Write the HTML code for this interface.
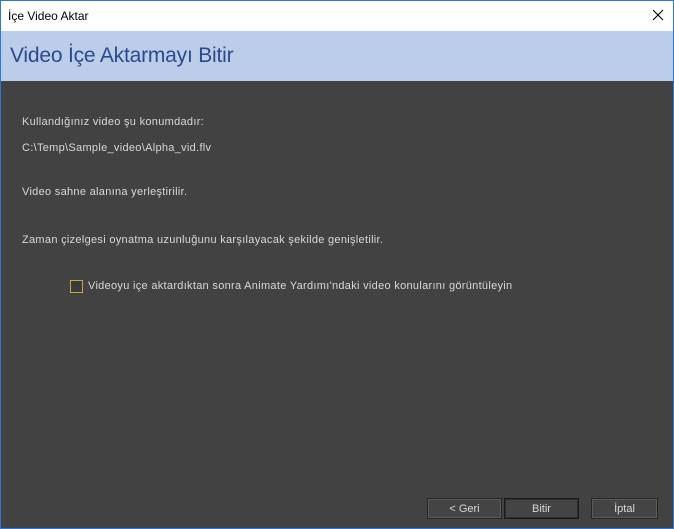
<!DOCTYPE html>
<html><head><meta charset="utf-8"><style>
*{margin:0;padding:0;box-sizing:border-box}
body{width:674px;height:529px;overflow:hidden;background:#2b79d0;font-family:"Liberation Sans",sans-serif;position:relative}
#win{position:absolute;left:1px;top:1px;width:672px;height:527px;background:#424242}
#tb{position:absolute;left:0;top:0;width:672px;height:30px;background:#fff;color:#000;font-size:12px}
#tb span{position:absolute;left:7px;top:8px}
#hd{position:absolute;left:0;top:30px;width:672px;height:50px;background:#bccdea;color:#2a4a8c;font-size:21px}
#hd span{position:absolute;left:9px;top:13px;letter-spacing:-0.2px}
.t{position:absolute;left:21px;color:#d8d8d8;font-size:11px;letter-spacing:0.3px}
.b{position:absolute;top:497px;height:21px;border:1px solid #262626;background:#444;box-shadow:inset 0 0 0 1px #5a5a5a;color:#d8d8d8;font-size:11px;text-align:center;line-height:21px}
</style></head><body><div id="win">
<div id="tb"><span>İçe Video Aktar</span>
<svg style="position:absolute;left:651px;top:8px" width="12" height="12"><path d="M1 1L11 11M11 1L1 11" stroke="#000" stroke-width="1.1"/></svg></div>
<div id="hd"><span>Video İçe Aktarmayı Bitir</span></div>
<div class="t" style="top:115px">Kullandığınız video şu konumdadır:</div>
<div class="t" style="top:141px">C:\Temp\Sample_video\Alpha_vid.flv</div>
<div class="t" style="top:185px">Video sahne alanına yerleştirilir.</div>
<div class="t" style="top:233px">Zaman çizelgesi oynatma uzunluğunu karşılayacak şekilde genişletilir.</div>
<div style="position:absolute;left:69px;top:279px;width:13px;height:13px;border:1px solid #c8a93a;background:#3a3a3a"></div>
<div class="t" style="left:87px;top:279px">Videoyu içe aktardıktan sonra Animate Yardımı'ndaki video konularını görüntüleyin</div>
<div class="b" style="left:426px;width:75px">&lt; Geri</div>
<div class="b" style="left:503px;width:75px;border-color:#1a1a1a;box-shadow:inset 0 0 0 1px #2e2e2e">Bitir</div>
<div class="b" style="left:590px;width:67px">İptal</div>
</div></body></html>
